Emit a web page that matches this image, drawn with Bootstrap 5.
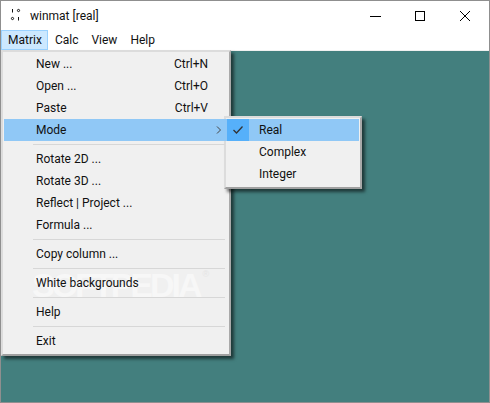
<!DOCTYPE html>
<html lang="en">
<head>
<meta charset="utf-8">
<title>winmat [real]</title>
<link href="https://cdn.jsdelivr.net/npm/bootstrap@5.3.0/dist/css/bootstrap.min.css" rel="stylesheet">
<style>
html,body{margin:0;height:403px;overflow:hidden;background:#fff}
body{font-family:Roboto,"Open Sans","Liberation Sans",sans-serif;font-size:12px;color:#000;line-height:1}
.win{position:relative;width:490px;height:403px;border:1px solid #8f8f8f;display:flex;flex-direction:column;overflow:hidden}
.titlebar{height:29px;background:#fff;flex:none;padding-left:9px;padding-right:1px}
.tb-title{font-size:12px;margin-left:4px;color:#111}
.wbtn{width:45px;height:29px}
.menubar{height:20px;background:#fff;flex:none}
.mb-item{height:20px;padding:0 6.500px;display:flex;align-items:center;color:#111}
.mb-item.on{background:#cce8ff;border:1px solid #99d1ff;padding:0 5.500px 0 6px}
.edge{height:1px;background:#f0f0f0;flex:none}
.client{flex:1;background:#437f7e}
.popup{position:absolute;background:#f0f0f0;border:1px solid #a8a8a8;border-width:2px;border-color:#dcdcdc #a9a9a9 #a0a0a0 #dcdcdc;box-shadow:3px 3px 3px rgba(0,0,0,.55);padding:1px}
.p-main{left:0;top:49px;width:230px;height:306px}
.p-sub{left:223px;top:115px;width:138px;height:73px}
.mi{height:22px;display:flex;align-items:center;color:#111;position:relative;z-index:1}
.mi.sel{background:#90c8f6}
.mi-label{padding-left:32px;flex:1}
.mi-key{position:absolute;right:20px;top:5px}
.arrow{position:absolute;right:6px;top:7px}
.sepline{height:7px;padding:3px 0 3px 29px;position:relative;z-index:1}
.sepline>div{height:1px;background:#d7d7d7;margin-right:3px}
.tick{position:absolute;left:0;top:0;width:22px;height:22px;background:#56b0fa;display:flex;align-items:center;justify-content:center}
.wm{position:absolute;left:31px;top:266px;font-family:"Liberation Sans",sans-serif;font-weight:700;font-size:34px;color:#f7f7f7;letter-spacing:-3px;z-index:0;white-space:nowrap;line-height:36px}
.wm-r{font-size:9px;vertical-align:top;font-weight:400;line-height:14px;letter-spacing:0;margin-left:3px;color:#e4e4e4}
</style>
</head>
<body>
<div class="win">
  <div class="titlebar d-flex align-items-center">
    <svg width="16" height="17" viewBox="0 0 16 17" aria-hidden="true"><g fill="none" stroke="#111" stroke-width="1"><path d="M2.500 2v3.500"/><circle cx="8.500" cy="3.500" r="1.100"/><circle cx="2.500" cy="11.500" r="1.100"/><path d="M8.500 10v3.500"/></g></svg>
    <span class="tb-title">winmat [real]</span>
    <div class="ms-auto d-flex">
      <div class="wbtn d-flex align-items-center justify-content-center"><svg width="12" height="12" viewBox="0 0 12 12"><path d="M0 6.500h11" stroke="#000"/></svg></div>
      <div class="wbtn d-flex align-items-center justify-content-center"><svg width="12" height="12" viewBox="0 0 12 12"><rect x=".5" y="1.500" width="9" height="9" fill="none" stroke="#000"/></svg></div>
      <div class="wbtn d-flex align-items-center justify-content-center"><svg width="12" height="12" viewBox="0 0 12 12"><path d="M0 1l10 10M10 1L0 11" stroke="#000" fill="none"/></svg></div>
    </div>
  </div>
  <div class="menubar d-flex">
    <div class="mb-item on">Matrix</div>
    <div class="mb-item">Calc</div>
    <div class="mb-item">View</div>
    <div class="mb-item">Help</div>
  </div>
  <div class="edge"></div>
  <div class="client"></div>

  <div class="popup p-main">
    <div class="mi"><span class="mi-label">New ...</span><span class="mi-key">Ctrl+N</span></div>
    <div class="mi"><span class="mi-label">Open ...</span><span class="mi-key">Ctrl+O</span></div>
    <div class="mi"><span class="mi-label">Paste</span><span class="mi-key">Ctrl+V</span></div>
    <div class="mi sel"><span class="mi-label">Mode</span>
      <svg class="arrow" width="6" height="8" viewBox="0 0 6 8"><path d="M1 .5L4.500 4 1 7.500" fill="none" stroke="#444"/></svg></div>
    <div class="sepline"><div></div></div>
    <div class="mi"><span class="mi-label">Rotate 2D ...</span></div>
    <div class="mi"><span class="mi-label">Rotate 3D ...</span></div>
    <div class="mi"><span class="mi-label">Reflect | Project ...</span></div>
    <div class="mi"><span class="mi-label">Formula ...</span></div>
    <div class="sepline"><div></div></div>
    <div class="mi"><span class="mi-label">Copy column ...</span></div>
    <div class="sepline"><div></div></div>
    <div class="mi"><span class="mi-label">White backgrounds</span></div>
    <div class="sepline"><div></div></div>
    <div class="mi"><span class="mi-label">Help</span></div>
    <div class="sepline"><div></div></div>
    <div class="mi"><span class="mi-label">Exit</span></div>
  </div>
  <div class="wm">SOFTPEDIA<span class="wm-r">®</span></div>

  <div class="popup p-sub">
    <div class="mi sel"><span class="tick"><svg width="12" height="10" viewBox="0 0 12 10"><path d="M1.500 5l3 3 6-6.500" fill="none" stroke="#333" stroke-width="1.300"/></svg></span><span class="mi-label">Real</span></div>
    <div class="mi"><span class="mi-label">Complex</span></div>
    <div class="mi"><span class="mi-label">Integer</span></div>
  </div>
</div>
<script src="https://cdn.jsdelivr.net/npm/bootstrap@5.3.0/dist/js/bootstrap.bundle.min.js"></script>
</body>
</html>
